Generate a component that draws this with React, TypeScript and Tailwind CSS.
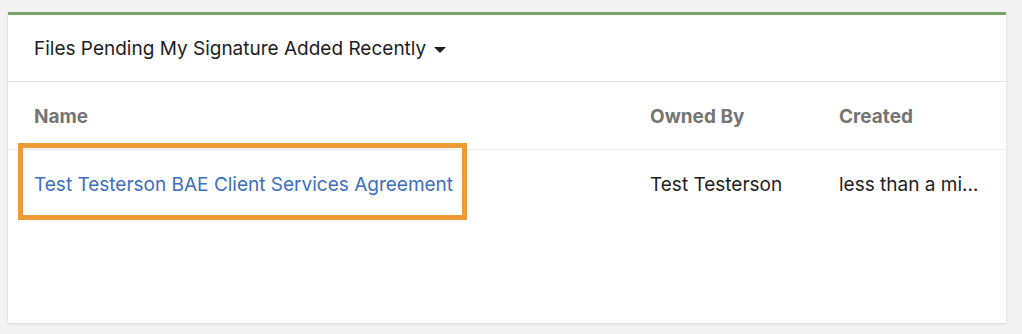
import React from "react";

export default function App() {
  const font = { fontFamily: "Inter, 'Noto Sans', sans-serif" };
  return (
    <div className="w-[1022px] h-[334px] bg-[#f3f3f3] pt-[12px] pl-[8px] pr-[16px]" style={font}>
      <div className="relative bg-white border-t-[3px] border-[#76a46a] h-[311px] shadow-[0_1px_3px_rgba(0,0,0,0.12)]">
        <div className="h-[67px] flex items-center px-[26px] pt-[2px] border-b border-[#e2e2e2]">
          <span className="text-[19px] text-[#1d1d1f]">Files Pending My Signature Added Recently</span>
          <svg className="ml-[8px] mt-[2px]" width="12" height="6" viewBox="0 0 12 6">
            <path d="M0 0 L12 0 L6 6 Z" fill="#1d1d1f" />
          </svg>
        </div>
        <div className="grid grid-cols-[616px_189px_141px] px-[26px] pt-[4px] h-[68px] items-center border-b border-[#ececec]">
          <span className="text-[19px] font-bold text-[#757575]">Name</span>
          <span className="text-[19px] font-bold text-[#757575]">Owned By</span>
          <span className="text-[19px] font-bold text-[#757575]">Created</span>
        </div>
        <div className="relative grid grid-cols-[616px_189px_141px] px-[26px] pt-[4px] h-[67px] items-center">
          <span className="text-[19px] text-[#3b6fc1]">Test Testerson BAE Client Services Agreement</span>
          <span className="text-[19px] text-[#1d1d1f]">Test Testerson</span>
          <span className="text-[19px] text-[#1d1d1f] truncate">less than a minute ago</span>
          <div className="absolute left-[10px] top-[-7px] w-[449px] h-[77px] border-[5px] border-[#f09a37]" />
        </div>
      </div>
    </div>
  );
}
